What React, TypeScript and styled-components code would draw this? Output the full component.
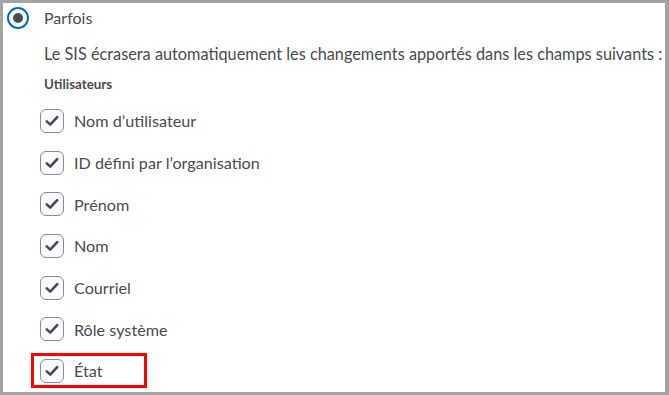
import React from "react";
import styled, { createGlobalStyle } from "styled-components";

const Global = createGlobalStyle`
  html, body { margin: 0; padding: 0; background: #a3a3a3; }
  body { font-family: Lato, "Noto Sans", sans-serif; }
`;

const Frame = styled.div`
  box-sizing: border-box;
  width: 669px;
  height: 395px;
  border-style: solid;
  border-color: #a3a3a3;
  border-width: 3px 4px 3px 3px;
  background: #ffffff;
  overflow: hidden;
  color: #494c4e;
`;

const RadioRow = styled.div`
  display: flex;
  align-items: center;
  height: 30px;
  padding-left: 4px;
`;

const Radio = styled.span`
  box-sizing: border-box;
  width: 22px;
  height: 22px;
  border-radius: 50%;
  border: 2.5px solid #006fbf;
  display: flex;
  align-items: center;
  justify-content: center;
  &::after {
    content: "";
    width: 10px;
    height: 10px;
    border-radius: 50%;
    background: #494c4e;
  }
`;

const RadioLabel = styled.span`
  margin-left: 15px;
  font-size: 16px;
  margin-top: -2px;
`;

const Body = styled.div`
  padding-left: 41px;
`;

const Desc = styled.p`
  margin: 11px 0 0 0;
  font-size: 16.3px;
  line-height: 20px;
  white-space: nowrap;
`;

const GroupTitle = styled.div`
  margin-top: 11px;
  font-size: 13.4px;
  font-weight: 700;
  line-height: 18px;
`;

const List = styled.div`
  display: flex;
  flex-direction: column;
  margin-top: 7px;
  margin-left: -13px;
`;

const Item = styled.div<{ $highlight?: boolean }>`
  box-sizing: border-box;
  display: flex;
  align-items: center;
  height: 41.7px;
  width: 116px;
  padding-left: ${(p) => (p.$highlight ? "6px" : "9px")};
  border: ${(p) => (p.$highlight ? "3px solid #ff0000" : "none")};
`;

const HighlightItem = styled(Item)`
  height: 35px;
  margin-top: 3px;
`;

const Box = styled.span`
  box-sizing: border-box;
  flex: none;
  width: 24px;
  height: 24px;
  border: 1px solid #8a8c8e;
  border-radius: 6px;
  background: #f9fbff;
  display: flex;
  align-items: center;
  justify-content: center;
`;

const Label = styled.span`
  margin-left: 10px;
  font-size: 16.2px;
  white-space: nowrap;
`;

const Check = () => (
  <svg width="14" height="12" viewBox="0 0 14 12">
    <path d="M1.8 6.4 L5.2 9.6 L12.2 2.2" fill="none" stroke="#494c4e" strokeWidth="2.6" strokeLinecap="round" strokeLinejoin="round" />
  </svg>
);

const items = [
  "Nom d’utilisateur",
  "ID défini par l’organisation",
  "Prénom",
  "Nom",
  "Courriel",
  "Rôle système",
];

export default function App() {
  return (
    <>
      <Global />
      <Frame>
        <RadioRow>
          <Radio />
          <RadioLabel>Parfois</RadioLabel>
        </RadioRow>
        <Body>
          <Desc>Le SIS écrasera automatiquement les changements apportés dans les champs suivants :</Desc>
          <GroupTitle>Utilisateurs</GroupTitle>
          <List>
            {items.map((t) => (
              <Item key={t}>
                <Box>
                  <Check />
                </Box>
                <Label>{t}</Label>
              </Item>
            ))}
            <HighlightItem $highlight>
              <Box>
                <Check />
              </Box>
              <Label>État</Label>
            </HighlightItem>
          </List>
        </Body>
      </Frame>
    </>
  );
}
